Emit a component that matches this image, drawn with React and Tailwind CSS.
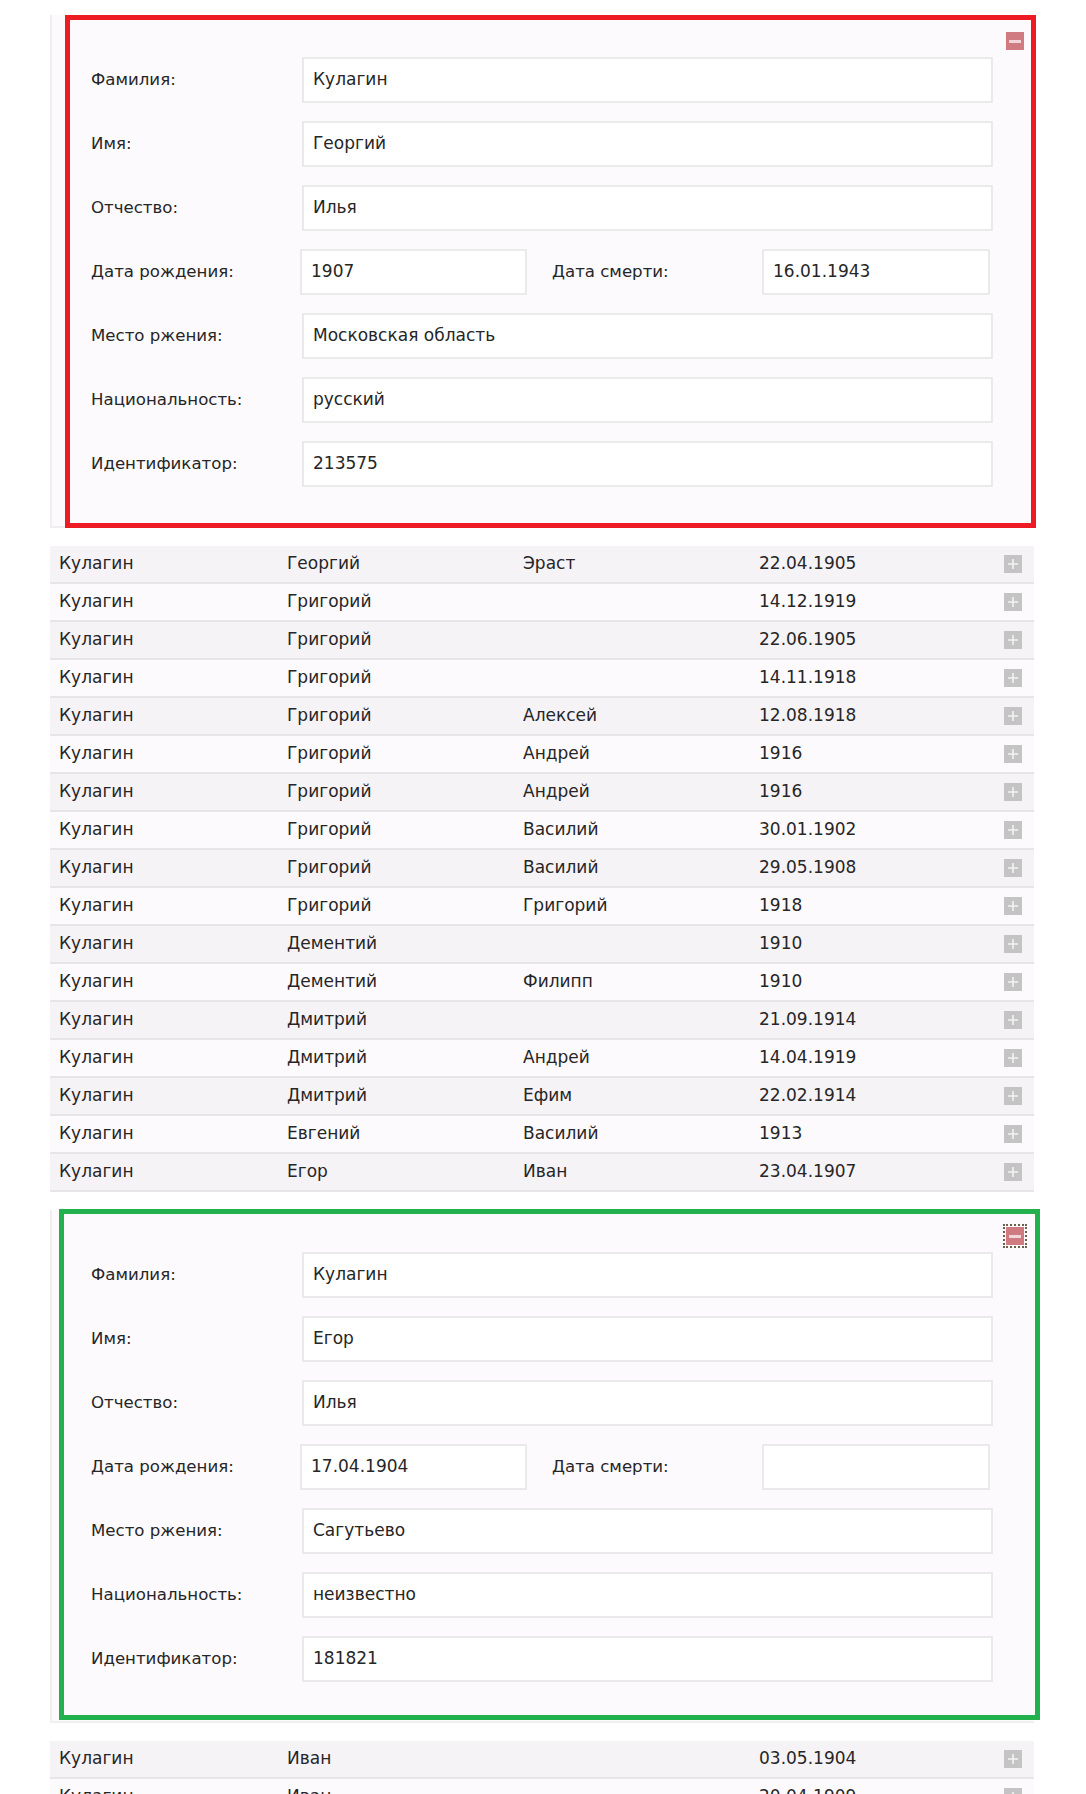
import React from "react";

const people = [
  ["Кулагин", "Георгий", "Эраст", "22.04.1905"],
  ["Кулагин", "Григорий", "", "14.12.1919"],
  ["Кулагин", "Григорий", "", "22.06.1905"],
  ["Кулагин", "Григорий", "", "14.11.1918"],
  ["Кулагин", "Григорий", "Алексей", "12.08.1918"],
  ["Кулагин", "Григорий", "Андрей", "1916"],
  ["Кулагин", "Григорий", "Андрей", "1916"],
  ["Кулагин", "Григорий", "Василий", "30.01.1902"],
  ["Кулагин", "Григорий", "Василий", "29.05.1908"],
  ["Кулагин", "Григорий", "Григорий", "1918"],
  ["Кулагин", "Дементий", "", "1910"],
  ["Кулагин", "Дементий", "Филипп", "1910"],
  ["Кулагин", "Дмитрий", "", "21.09.1914"],
  ["Кулагин", "Дмитрий", "Андрей", "14.04.1919"],
  ["Кулагин", "Дмитрий", "Ефим", "22.02.1914"],
  ["Кулагин", "Евгений", "Василий", "1913"],
  ["Кулагин", "Егор", "Иван", "23.04.1907"],
];

const morePeople = [
  ["Кулагин", "Иван", "", "03.05.1904"],
  ["Кулагин", "Иван", "", "20.04.1909"],
];

const PlusIcon = () => (
  <span className="flex h-[18px] w-[18px] items-center justify-center bg-[#c4c4c4]">
    <svg width="12" height="12" viewBox="0 0 12 12">
      <path d="M6 1v10M1 6h10" stroke="#f4f4f4" strokeWidth="1.6" />
    </svg>
  </span>
);

const MinusIcon = ({ focused }) => (
  <span
    className={
      "flex h-[18px] w-[18px] items-center justify-center bg-[#d07b81]" +
      (focused ? " outline-2 outline-dotted outline-[#6e5e4c] outline-offset-1" : "")
    }
  >
    <span className="block h-[3px] w-[12px] bg-[#f3d6d8]" />
  </span>
);

const Field = ({ label, value }) => (
  <div className="flex h-[46px] items-center">
    <div className="w-[211px] shrink-0 text-[16.6px]">{label}</div>
    <div className="flex h-full flex-1 items-center border-2 border-[#eaeaea] bg-white pl-[9px]">
      {value}
    </div>
  </div>
);

const Card = ({ data, frame, focused }) => {
  return (
    <div className="relative h-[513px] border-2 border-t-0 border-r-0 border-[#efefef] bg-[#fdfafd]">
      <div className="flex justify-end pr-[10px] pt-[17px]">
        <MinusIcon focused={focused} />
      </div>
      <div className="flex flex-col gap-[18px] pl-[39px] pr-[41px] pt-[7px]">
        <Field label="Фамилия:" value={data.last} />
        <Field label="Имя:" value={data.first} />
        <Field label="Отчество:" value={data.middle} />
        <div className="flex h-[46px] items-center">
          <div className="w-[209px] shrink-0 text-[16.6px]">Дата рождения:</div>
          <div className="flex h-full w-[227px] items-center border-2 border-[#eaeaea] bg-white pl-[9px]">
            {data.born}
          </div>
          <div className="w-[235px] shrink-0 pl-[25px] text-[16.6px]">Дата смерти:</div>
          <div className="flex h-full w-[228px] items-center border-2 border-[#eaeaea] bg-white pl-[9px]">
            {data.died}
          </div>
        </div>
        <Field label="Место ржения:" value={data.place} />
        <Field label="Национальность:" value={data.nation} />
        <Field label="Идентификатор:" value={data.id} />
      </div>
      {/* annotation frame drawn over the card */}
      <div className={frame} />
    </div>
  );
};

const Row = ({ row, index }) => (
  <div
    className={
      "flex h-[38px] items-center border-b-2 border-[#e7e5e7] pl-[9px] pr-[12px] " +
      (index % 2 === 0 ? "bg-[#f6f3f6]" : "bg-[#fdfafd]")
    }
  >
    <div className="w-[228px] shrink-0">{row[0]}</div>
    <div className="w-[236px] shrink-0">{row[1]}</div>
    <div className="w-[236px] shrink-0">{row[2]}</div>
    <div className="flex-1">{row[3]}</div>
    <PlusIcon />
  </div>
);

export default function App() {
  const first = {
    last: "Кулагин",
    first: "Георгий",
    middle: "Илья",
    born: "1907",
    died: "16.01.1943",
    place: "Московская область",
    nation: "русский",
    id: "213575",
  };
  const second = {
    last: "Кулагин",
    first: "Егор",
    middle: "Илья",
    born: "17.04.1904",
    died: "",
    place: "Сагутьево",
    nation: "неизвестно",
    id: "181821",
  };

  return (
    <div
      className="min-h-screen bg-white pl-[50px] pt-[15px] text-[17px] text-[#262626]"
      style={{ fontFamily: '"DejaVu Sans", Verdana, sans-serif' }}
    >
      <div className="w-[984px]">
        <Card
          data={first}
          frame="pointer-events-none absolute bottom-[-2px] left-[13px] top-0 w-[971px] border-[5px] border-[#ed1c24]"
        />
        <div className="mt-[18px]">
          {people.map((row, index) => (
            <Row row={row} index={index} key={index} />
          ))}
        </div>
        <div className="mt-[18px]">
          <Card
            data={second}
            focused
            frame="pointer-events-none absolute bottom-[1px] left-[7px] top-[-1px] w-[981px] border-[5px] border-[#22b14c]"
          />
        </div>
        <div className="mt-[18px]">
          {morePeople.map((row, index) => (
            <Row row={row} index={index} key={index} />
          ))}
        </div>
      </div>
    </div>
  );
}
